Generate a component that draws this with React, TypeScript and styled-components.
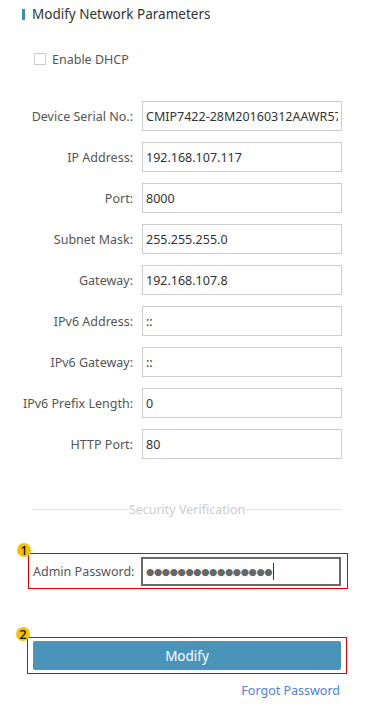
import styled, { createGlobalStyle } from "styled-components";

const GlobalStyle = createGlobalStyle`
  html, body {
    margin: 0;
    padding: 0;
    background: #ffffff;
  }
  body {
    font-family: "Noto Sans", "Liberation Sans", sans-serif;
    font-size: 12.5px;
    color: #333333;
  }
`;

const Page = styled.div`
  width: 374px;
  padding: 4px 0 0 0;
  box-sizing: border-box;
`;

const Header = styled.div`
  display: flex;
  align-items: center;
  gap: 7px;
  height: 20px;
  padding-left: 22px;
`;

const HeaderBar = styled.span`
  width: 3px;
  height: 11px;
  background: #3d8bbd;
`;

const HeaderTitle = styled.h5`
  margin: 0;
  font-size: 13.5px;
  font-weight: normal;
  color: #333333;
`;

const CheckRow = styled.label`
  display: flex;
  align-items: center;
  gap: 6px;
  margin: 26px 0 0 34px;
  height: 18px;
  color: #555555;
`;

const CheckBox = styled.span`
  width: 12px;
  height: 12px;
  box-sizing: border-box;
  border: 1px solid #cccccc;
  background: #ffffff;
`;

const Fields = styled.div`
  display: flex;
  flex-direction: column;
  gap: 11px;
  margin-top: 33px;
  padding-left: 22px;
`;

const FieldRow = styled.div`
  display: grid;
  grid-template-columns: 111px 200px;
  column-gap: 9px;
  align-items: center;
`;

const FieldLabel = styled.span`
  text-align: right;
  color: #555555;
  white-space: nowrap;
`;

const FieldInput = styled.input`
  width: 200px;
  height: 30px;
  box-sizing: border-box;
  border: 1px solid #cccccc;
  padding: 0 3px;
  font-family: inherit;
  font-size: 12.5px;
  color: #333333;
  outline: none;
  background: #ffffff;
`;

const Divider = styled.div`
  display: flex;
  align-items: center;
  margin: 42px 32px 0 32px;
  color: #cccccc;

  &::before,
  &::after {
    content: "";
    flex: 1;
    height: 1px;
    background: #e5e5e5;
  }
`;

const Marked = styled.div`
  position: relative;
  box-sizing: border-box;
  border: 1px solid #e60000;
`;

const Badge = styled.span`
  position: absolute;
  left: -12px;
  top: -11px;
  width: 14px;
  height: 14px;
  border-radius: 50%;
  background: #f7c300;
  color: #111111;
  font-size: 13px;
  line-height: 14px;
  text-align: center;
  font-weight: 500;
`;

const PasswordBox = styled(Marked)`
  margin: 35px 0 0 28px;
  width: 320px;
  height: 36px;
  display: grid;
  grid-template-columns: 108px 200px;
  align-items: center;
  padding-left: 4px;
`;

const PasswordLabel = styled.span`
  color: #555555;
  white-space: nowrap;
`;

const PasswordField = styled.div`
  width: 200px;
  height: 29px;
  box-sizing: border-box;
  border: 2px solid #6b6b6b;
  display: flex;
  align-items: center;
  padding-left: 3px;
`;

const Dots = styled.span`
  color: #666666;
  font-size: 9.5px;
  letter-spacing: -0.4px;
  font-family: "DejaVu Sans", sans-serif;
`;

const Caret = styled.span`
  width: 1px;
  height: 17px;
  background: #333333;
  margin-left: 1px;
`;

const ButtonBox = styled(Marked)`
  margin: 48px 0 0 27px;
  width: 320px;
  height: 37px;
  padding: 3px 5px;
`;

const ModifyButton = styled.button`
  display: block;
  width: 100%;
  height: 29px;
  border: none;
  border-radius: 2px;
  background: #4b94b9;
  color: #ffffff;
  font-family: inherit;
  font-size: 13.5px;
  cursor: pointer;
`;

const Footer = styled.div`
  display: flex;
  justify-content: flex-end;
  width: 340px;
  margin-top: 8px;
`;

const ForgotLink = styled.a`
  color: #4f7ee6;
  text-decoration: none;
  font-size: 12.5px;
`;

const fields = [
  { label: "Device Serial No.:", value: "CMIP7422-28M20160312AAWR57432" },
  { label: "IP Address:", value: "192.168.107.117" },
  { label: "Port:", value: "8000" },
  { label: "Subnet Mask:", value: "255.255.255.0" },
  { label: "Gateway:", value: "192.168.107.8" },
  { label: "IPv6 Address:", value: "::" },
  { label: "IPv6 Gateway:", value: "::" },
  { label: "IPv6 Prefix Length:", value: "0" },
  { label: "HTTP Port:", value: "80" },
];

export default function App() {
  return (
    <Page>
      <GlobalStyle />
      <Header>
        <HeaderBar />
        <HeaderTitle>Modify Network Parameters</HeaderTitle>
      </Header>

      <CheckRow>
        <CheckBox />
        Enable DHCP
      </CheckRow>

      <Fields>
        {fields.map((f) => (
          <FieldRow key={f.label}>
            <FieldLabel>{f.label}</FieldLabel>
            <FieldInput defaultValue={f.value} />
          </FieldRow>
        ))}
      </Fields>

      <Divider>Security Verification</Divider>

      <PasswordBox>
        <Badge>1</Badge>
        <PasswordLabel>Admin Password:</PasswordLabel>
        <PasswordField>
          <Dots>{"●".repeat(16)}</Dots>
          <Caret />
        </PasswordField>
      </PasswordBox>

      <ButtonBox>
        <Badge>2</Badge>
        <ModifyButton>Modify</ModifyButton>
      </ButtonBox>

      <Footer>
        <ForgotLink href="#">Forgot Password</ForgotLink>
      </Footer>
    </Page>
  );
}
